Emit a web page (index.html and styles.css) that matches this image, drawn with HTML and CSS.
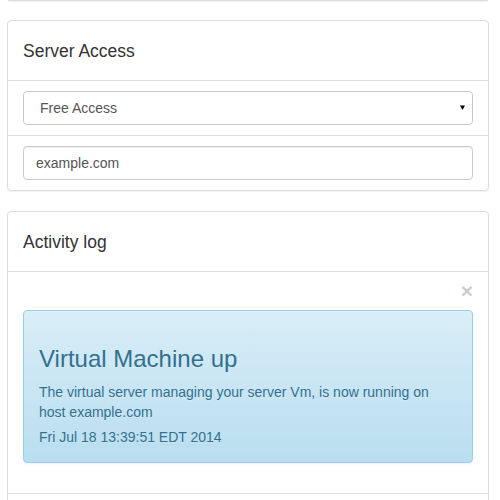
FILE: index.html
```html
<!DOCTYPE html>
<html>
<head>
<meta charset="utf-8">
<link rel="stylesheet" href="styles.css">
</head>
<body>
<div class="page">
  <div class="prev-panel"></div>

  <div class="panel">
    <div class="panel-heading"><h3 class="panel-title">Server Access</h3></div>
    <div class="panel-row">
      <div class="select">
        <span>Free Access</span>
        <svg class="caret" width="7" height="6" viewBox="0 0 7 6"><polygon points="1,0.5 6,0.5 3.5,5" fill="#000"/></svg>
      </div>
    </div>
    <div class="panel-row">
      <div class="input">example.com</div>
    </div>
  </div>

  <div class="panel">
    <div class="panel-heading"><h3 class="panel-title">Activity log</h3></div>
    <div class="panel-body">
      <div class="close-row"><span class="close">&times;</span></div>
      <div class="alert">
        <h3 class="alert-title">Virtual Machine up</h3>
        <p>The virtual server managing your server Vm, is now running on host example.com</p>
        <p class="time">Fri Jul 18 13:39:51 EDT 2014</p>
      </div>
    </div>
    <div class="panel-row empty"></div>
  </div>
</div>
</body>
</html>
```
FILE: styles.css
```css
html, body {
  margin: 0;
  padding: 0;
  background: #fff;
}
body {
  font-family: "Liberation Sans", Arial, Helvetica, sans-serif;
  font-size: 14px;
  line-height: 20px;
  color: #333;
}
.page {
  padding: 0 11px 0 7px;
}
.prev-panel {
  height: 0;
  border-bottom: 1px solid #ddd;
  border-radius: 0 0 4px 4px;
  box-shadow: 0 1px 1px rgba(0,0,0,.05);
  margin: 0 1px 19px 1px;
}
.panel {
  border: 1px solid #ddd;
  border-radius: 4px;
  box-shadow: 0 1px 1px rgba(0,0,0,.05);
  background: #fff;
  margin-bottom: 20px;
}
.panel-heading {
  padding: 21px 15px 19px;
  border-bottom: 1px solid #ddd;
}
.panel-title {
  margin: 0;
  font-size: 17.5px;
  font-weight: normal;
  line-height: 19px;
  color: #333;
}
.panel-row {
  padding: 10px 15px;
}
.panel-row + .panel-row {
  border-top: 1px solid #ddd;
}
.panel-body + .panel-row {
  border-top: 1px solid #ddd;
}
.panel-row.empty {
  height: 40px;
}
.select, .input {
  box-sizing: border-box;
  height: 34px;
  border: 1px solid #ccc;
  border-radius: 4px;
  box-shadow: inset 0 1px 1px rgba(0,0,0,.075);
  color: #555;
  font-size: 14px;
  display: flex;
  align-items: center;
}
.select {
  padding: 0 6px 0 16px;
  justify-content: space-between;
  box-shadow: none;
  border-color: #c8c8c8;
}
.caret {
  display: block;
}
.input {
  padding: 0 12px;
}
.panel-body {
  padding: 15px 15px 30px;
}
.close-row {
  height: 23px;
  display: flex;
  justify-content: flex-end;
  align-items: flex-start;
}
.close {
  font-size: 21px;
  font-weight: bold;
  line-height: 1;
  color: #000;
  opacity: .2;
  margin-top: -7px;
  margin-right: 0;
}
.alert {
  padding: 15px;
  border: 1px solid #9acfea;
  border-radius: 4px;
  background-color: #d9edf7;
  background-image: linear-gradient(to bottom, #d9edf7 0, #b9def0 100%);
  box-shadow: inset 0 1px 0 rgba(255,255,255,.25), 0 1px 2px rgba(0,0,0,.05);
  color: #31708f;
  text-shadow: 0 1px 0 rgba(255,255,255,.2);
}
.alert-title {
  margin: 20px 0 10px;
  font-size: 24px;
  font-weight: normal;
  line-height: 26px;
  color: #31708f;
}
.alert p {
  margin: 0;
}
.alert p + p {
  margin-top: 5px;
}
```
